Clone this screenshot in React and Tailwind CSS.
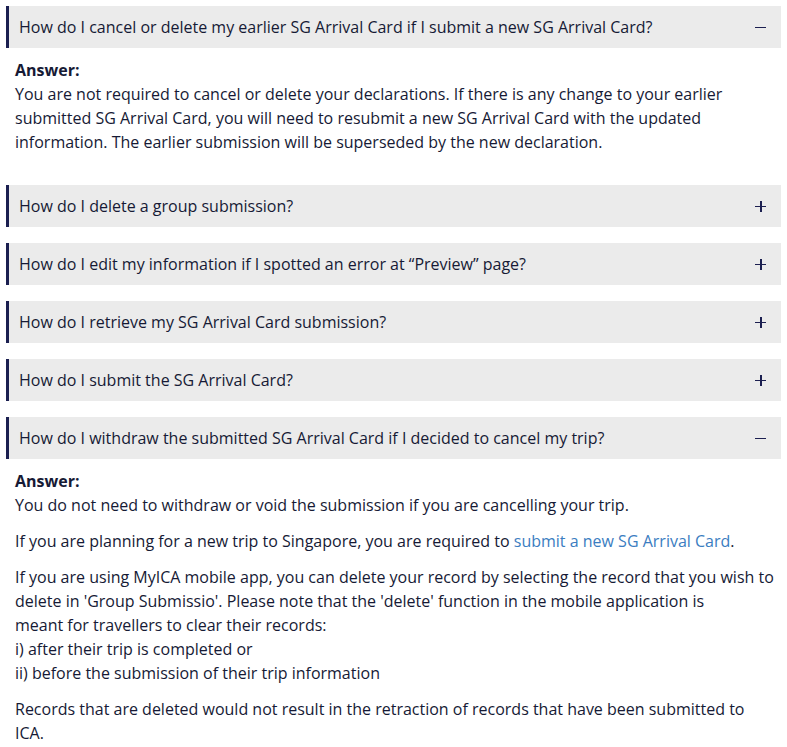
import React, { useState } from "react";

const faqs = [
  {
    q: "How do I cancel or delete my earlier SG Arrival Card if I submit a new SG Arrival Card?",
    a: (
      <p>
        You are not required to cancel or delete your declarations. If there is any change to your earlier
        submitted SG Arrival Card, you will need to resubmit a new SG Arrival Card with the updated
        information. The earlier submission will be superseded by the new declaration.
      </p>
    ),
  },
  { q: "How do I delete a group submission?" },
  { q: "How do I edit my information if I spotted an error at \u201cPreview\u201d page?" },
  { q: "How do I retrieve my SG Arrival Card submission?" },
  { q: "How do I submit the SG Arrival Card?" },
  {
    q: "How do I withdraw the submitted SG Arrival Card if I decided to cancel my trip?",
    a: (
      <>
        <p className="mb-3">You do not need to withdraw or void the submission if you are cancelling your trip.</p>
        <p className="mb-3">
          If you are planning for a new trip to Singapore, you are required to{" "}
          <a href="#" className="text-[#3b7dc1]">submit a new SG Arrival Card</a>.
        </p>
        <p className="mb-3">
          If you are using MyICA mobile app, you can delete your record by selecting the record that you wish
          to delete in 'Group Submissio'. Please note that the 'delete' function in the mobile application is
          <br />
          meant for travellers to clear their records:
          <br />
          i) after their trip is completed or
          <br />
          ii) before the submission of their trip information
        </p>
        <p>
          Records that are deleted would not result in the retraction of records that have been submitted to
          ICA.
        </p>
      </>
    ),
  },
];

function Item({ q, a, defaultOpen }) {
  const [open, setOpen] = useState(defaultOpen);
  return (
    <div className="mb-4">
      <button
        onClick={() => setOpen(!open)}
        className="flex h-[42px] w-full items-center justify-between border-l-[3px] border-[#1b1f50] bg-[#ebebeb] pl-[10px] pr-[15px] text-left"
      >
        <span>{q}</span>
        {open ? (
          <span className="block h-px w-[11px] bg-[#1b1f50]" />
        ) : (
          <span className="relative block h-[11px] w-[11px]">
            <span className="absolute left-0 top-[5px] h-[1.5px] w-[11px] bg-[#1b1f50]" />
            <span className="absolute left-[5px] top-0 h-[11px] w-[1.5px] bg-[#1b1f50]" />
          </span>
        )}
      </button>
      {open && a && (
        <div className="pb-[15px] pl-[9px] pr-1 pt-[10px]">
          <div className="font-bold">Answer:</div>
          {a}
        </div>
      )}
    </div>
  );
}

export default function App() {
  return (
    <div
      className="min-h-screen bg-white px-[6px] pt-[6px] text-[16px] leading-[24px] text-[#161a35]"
      style={{ fontFamily: "'Open Sans', 'Noto Sans', sans-serif" }}
    >
      {faqs.map((f, i) => (
        <Item key={i} q={f.q} a={f.a} defaultOpen={!!f.a} />
      ))}
    </div>
  );
}
